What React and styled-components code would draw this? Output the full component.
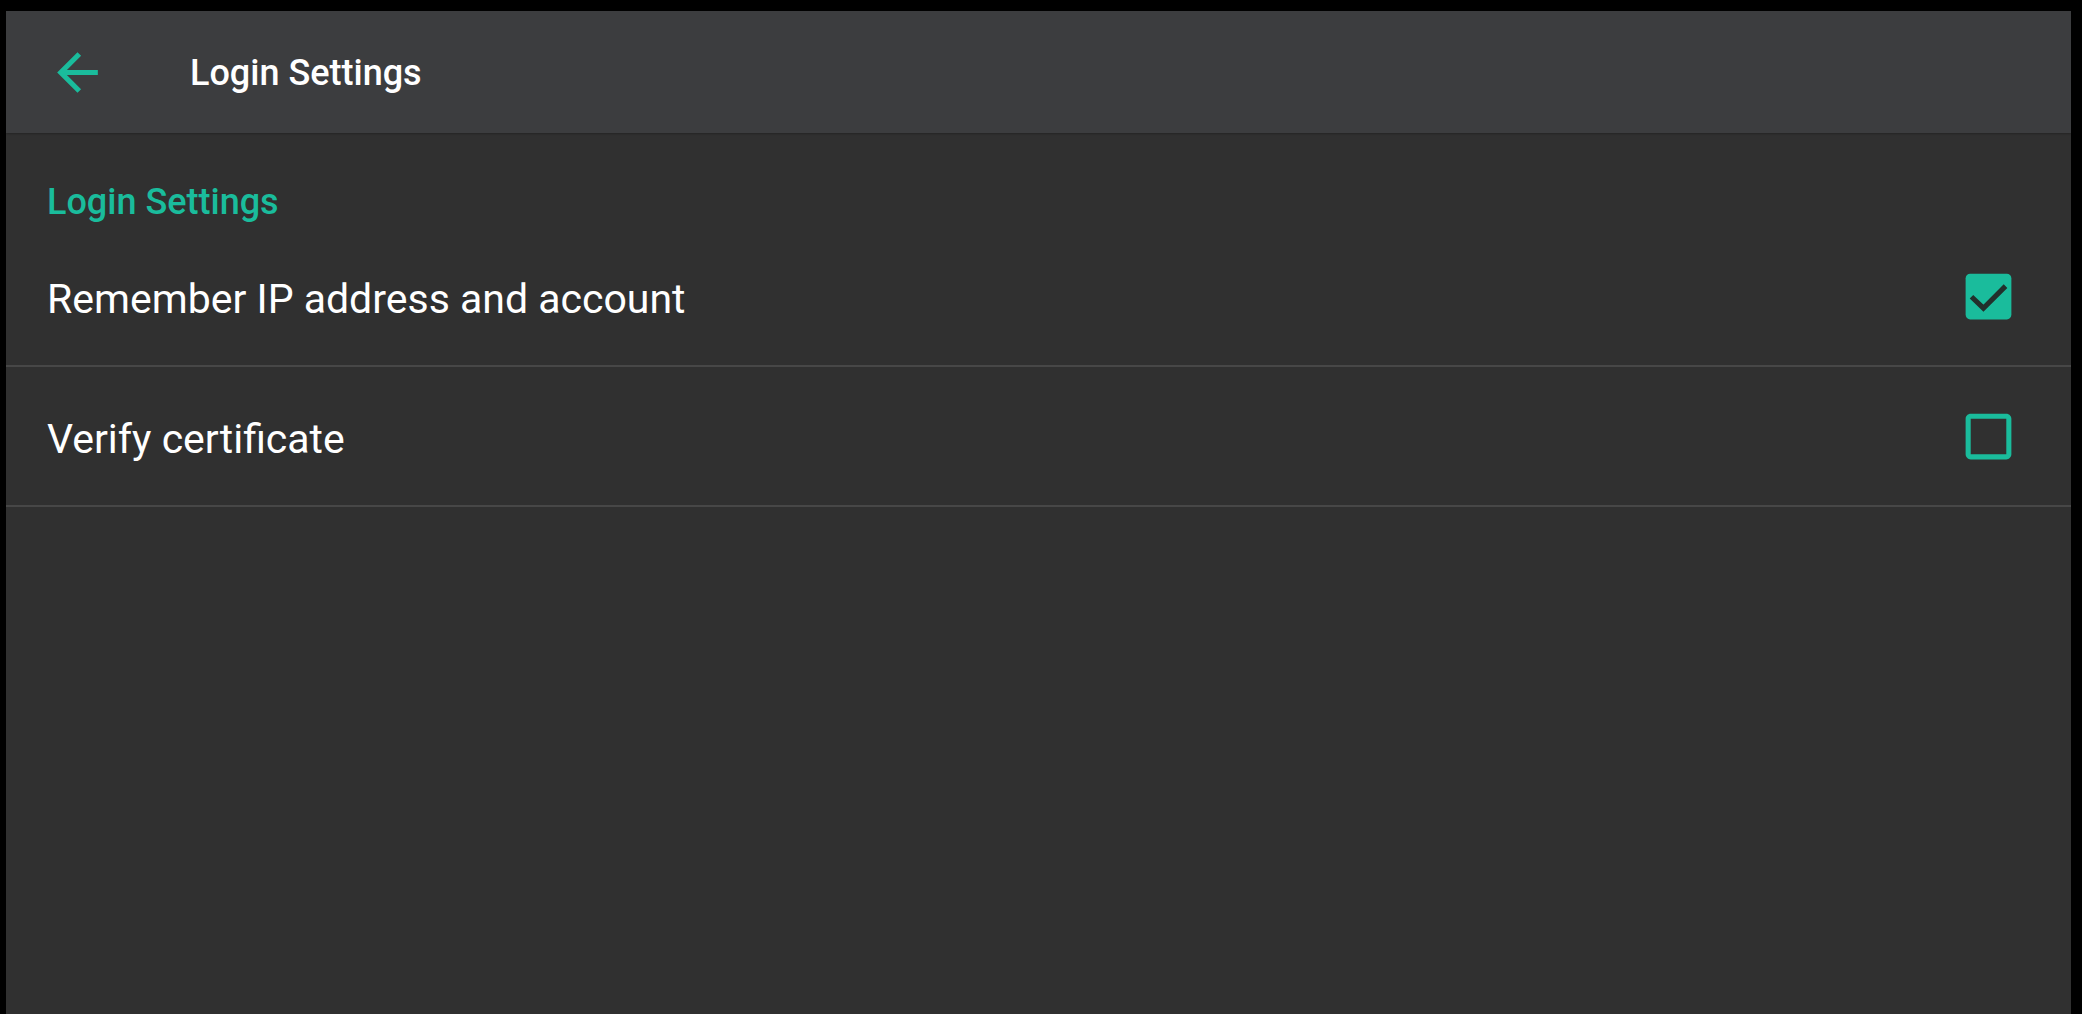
import React, { useState } from "react";
import styled, { createGlobalStyle } from "styled-components";

const Global = createGlobalStyle`
  html, body { margin: 0; padding: 0; background: #000; }
  body { font-family: Roboto, "Noto Sans", sans-serif; }
`;

const Frame = styled.div`
  box-sizing: border-box;
  height: 1014px;
  padding: 11px 11px 0 6px;
  background: #000;
`;

const Screen = styled.div`
  height: 100%;
  background: #303030;
  display: flex;
  flex-direction: column;
`;

const Toolbar = styled.header`
  height: 122px;
  flex: none;
  background: #3c3d3f;
  display: flex;
  align-items: center;
  padding-left: 41px;
  box-shadow: 0 1px 2px rgba(0, 0, 0, 0.25);
`;

const BackButton = styled.button`
  width: 61px;
  height: 61px;
  padding: 0;
  border: 0;
  background: none;
  color: #1abc9c;
  display: flex;
  cursor: pointer;
`;

const Title = styled.h1`
  margin: 2px 0 0 82px;
  font-family: Roboto, sans-serif;
  font-weight: 500;
  font-size: 36px;
  color: #ffffff;
`;

const SectionTitle = styled.div`
  height: 94px;
  flex: none;
  box-sizing: border-box;
  padding: 48px 0 0 41px;
  font-family: Roboto, sans-serif;
  font-weight: 500;
  font-size: 36px;
  line-height: 42px;
  color: #1abc9c;
`;

const Row = styled.label`
  height: 140px;
  flex: none;
  box-sizing: border-box;
  display: flex;
  align-items: center;
  justify-content: space-between;
  padding: 0 52px 0 41px;
  border-bottom: 2px solid #474747;
  cursor: pointer;
`;

const RowText = styled.span`
  padding-top: 5px;
  font-family: Roboto, sans-serif;
  font-weight: 400;
  font-size: 41px;
  color: #ffffff;
`;

const BoxIcon = styled.svg`
  width: 61px;
  height: 61px;
  flex: none;
  color: #1abc9c;
`;

const ArrowBack = () => (
  <svg viewBox="0 0 24 24" width="61" height="61" fill="currentColor">
    <path d="M20 11H7.83l5.59-5.59L12 4l-8 8 8 8 1.41-1.41L7.83 13H20v-2z" />
  </svg>
);

const Checkbox = ({ checked }) => (
  <BoxIcon viewBox="0 0 24 24">
    {checked ? (
      <>
        <rect x="3" y="3" width="18" height="18" rx="1.8" fill="currentColor" />
        <path d="M5.3 12.1 L10 16.6 L18.7 7.9" fill="none" stroke="#22302c" strokeWidth="2" />
      </>
    ) : (
      <path
        fill="currentColor"
        d="M19 5v14H5V5h14m0-2H5c-1.1 0-2 .9-2 2v14c0 1.1.9 2 2 2h14c1.1 0 2-.9 2-2V5c0-1.1-.9-2-2-2z"
      />
    )}
  </BoxIcon>
);

const items = [
  { id: "remember", label: "Remember IP address and account", checked: true },
  { id: "verify", label: "Verify certificate", checked: false },
];

export default function App() {
  const [state, setState] = useState(
    Object.fromEntries(items.map((i) => [i.id, i.checked]))
  );
  return (
    <>
      <Global />
      <Frame>
        <Screen>
          <Toolbar>
            <BackButton aria-label="Back">
              <ArrowBack />
            </BackButton>
            <Title>Login Settings</Title>
          </Toolbar>
          <SectionTitle>Login Settings</SectionTitle>
          {items.map((it) => (
            <Row
              key={it.id}
              onClick={() => setState((s) => ({ ...s, [it.id]: !s[it.id] }))}
            >
              <RowText>{it.label}</RowText>
              <Checkbox checked={state[it.id]} />
            </Row>
          ))}
        </Screen>
      </Frame>
    </>
  );
}
